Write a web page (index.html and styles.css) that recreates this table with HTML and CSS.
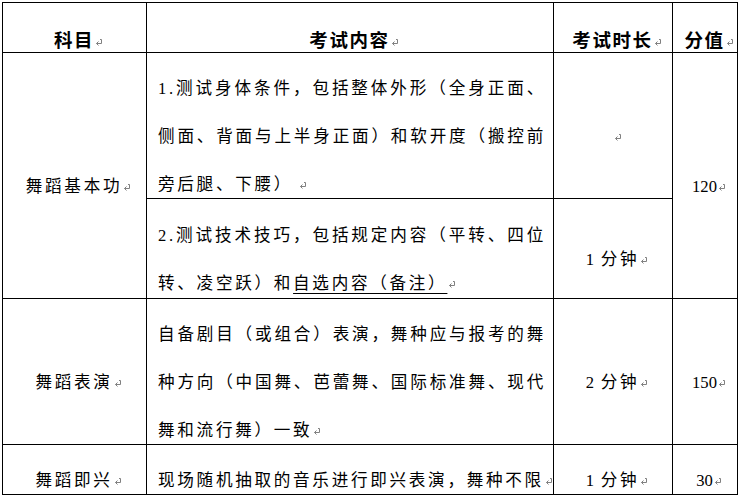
FILE: index.html
```html
<!DOCTYPE html>
<html lang="zh-CN">
<head>
<meta charset="utf-8">
<title>考试内容</title>
<link rel="stylesheet" href="styles.css">
</head>
<body>
<table class="exam">
  <colgroup>
    <col class="c1"><col class="c2"><col class="c3"><col class="c4">
  </colgroup>
  <tr class="h50">
    <th class="mid"><span class="ln">科目<svg class="pm" viewBox="0 0 8 8"><path d="M5 1.5H6.5V5.5H1.5M3.5 3.5L1.5 5.5L3.5 7.5"/></svg></span></th>
    <th class="mid"><span class="ln">考试内容<svg class="pm" viewBox="0 0 8 8"><path d="M5 1.5H6.5V5.5H1.5M3.5 3.5L1.5 5.5L3.5 7.5"/></svg></span></th>
    <th class="mid"><span class="ln">考试时长<svg class="pm" viewBox="0 0 8 8"><path d="M5 1.5H6.5V5.5H1.5M3.5 3.5L1.5 5.5L3.5 7.5"/></svg></span></th>
    <th class="mid"><span class="ln">分值<svg class="pm" viewBox="0 0 8 8"><path d="M5 1.5H6.5V5.5H1.5M3.5 3.5L1.5 5.5L3.5 7.5"/></svg></span></th>
  </tr>
  <tr class="h146">
    <td class="mid" rowspan="2"><span class="ln">舞蹈基本功<svg class="pm" viewBox="0 0 8 8"><path d="M5 1.5H6.5V5.5H1.5M3.5 3.5L1.5 5.5L3.5 7.5"/></svg></span></td>
    <td class="txt">
      <span class="ln jl">1.测试身体条件，包括整体外形（全身正面、</span>
      <span class="ln jl">侧面、背面与上半身正面）和软开度（搬控前</span>
      <span class="ln">旁后腿、下腰）<svg class="pm gap" viewBox="0 0 8 8"><path d="M5 1.5H6.5V5.5H1.5M3.5 3.5L1.5 5.5L3.5 7.5"/></svg></span>
    </td>
    <td class="mid"><span class="ln"><svg class="pm" viewBox="0 0 8 8"><path d="M5 1.5H6.5V5.5H1.5M3.5 3.5L1.5 5.5L3.5 7.5"/></svg></span></td>
    <td class="mid" rowspan="2"><span class="ln"><span class="num">120</span><svg class="pm" viewBox="0 0 8 8"><path d="M5 1.5H6.5V5.5H1.5M3.5 3.5L1.5 5.5L3.5 7.5"/></svg></span></td>
  </tr>
  <tr class="h100">
    <td class="txt">
      <span class="ln jl">2.测试技术技巧，包括规定内容（平转、四位</span>
      <span class="ln">转、凌空跃）和<span class="ul">自选内容（备注）</span><svg class="pm" viewBox="0 0 8 8"><path d="M5 1.5H6.5V5.5H1.5M3.5 3.5L1.5 5.5L3.5 7.5"/></svg></span>
    </td>
    <td class="mid"><span class="ln"><span class="num">1</span> 分钟<svg class="pm" viewBox="0 0 8 8"><path d="M5 1.5H6.5V5.5H1.5M3.5 3.5L1.5 5.5L3.5 7.5"/></svg></span></td>
  </tr>
  <tr class="h146">
    <td class="mid"><span class="ln">舞蹈表演<svg class="pm" viewBox="0 0 8 8"><path d="M5 1.5H6.5V5.5H1.5M3.5 3.5L1.5 5.5L3.5 7.5"/></svg></span></td>
    <td class="txt">
      <span class="ln jl">自备剧目（或组合）表演，舞种应与报考的舞</span>
      <span class="ln jl">种方向（中国舞、芭蕾舞、国际标准舞、现代</span>
      <span class="ln">舞和流行舞）一致<svg class="pm" viewBox="0 0 8 8"><path d="M5 1.5H6.5V5.5H1.5M3.5 3.5L1.5 5.5L3.5 7.5"/></svg></span>
    </td>
    <td class="mid"><span class="ln"><span class="num">2</span> 分钟<svg class="pm" viewBox="0 0 8 8"><path d="M5 1.5H6.5V5.5H1.5M3.5 3.5L1.5 5.5L3.5 7.5"/></svg></span></td>
    <td class="mid"><span class="ln"><span class="num">150</span><svg class="pm" viewBox="0 0 8 8"><path d="M5 1.5H6.5V5.5H1.5M3.5 3.5L1.5 5.5L3.5 7.5"/></svg></span></td>
  </tr>
  <tr class="h50">
    <td class="mid"><span class="ln">舞蹈即兴<svg class="pm" viewBox="0 0 8 8"><path d="M5 1.5H6.5V5.5H1.5M3.5 3.5L1.5 5.5L3.5 7.5"/></svg></span></td>
    <td class="txt"><span class="ln">现场随机抽取的音乐进行即兴表演，舞种不限<svg class="pm" viewBox="0 0 8 8"><path d="M5 1.5H6.5V5.5H1.5M3.5 3.5L1.5 5.5L3.5 7.5"/></svg></span></td>
    <td class="mid"><span class="ln"><span class="num">1</span> 分钟<svg class="pm" viewBox="0 0 8 8"><path d="M5 1.5H6.5V5.5H1.5M3.5 3.5L1.5 5.5L3.5 7.5"/></svg></span></td>
    <td class="mid"><span class="ln"><span class="num">30</span><svg class="pm" viewBox="0 0 8 8"><path d="M5 1.5H6.5V5.5H1.5M3.5 3.5L1.5 5.5L3.5 7.5"/></svg></span></td>
  </tr>
</table>
</body>
</html>
```
FILE: styles.css
```css
html, body {
  margin: 0;
  padding: 0;
  background: #ffffff;
}

body {
  padding: 2px 0 0 2px;
  font-family: "Liberation Serif", "Noto Sans CJK SC", serif;
  font-size: 16.6px;
  color: #000000;
}

.exam {
  border-collapse: collapse;
  table-layout: fixed;
  width: 735px;
}

.c1 { width: 144px; }
.c2 { width: 407px; }
.c3 { width: 119px; }
.c4 { width: 65px; }

.exam th,
.exam td {
  border: 1px solid #000000;
  padding: 0;
  vertical-align: middle;
}

.h50 { height: 50px; }
.h100 { height: 100px; }
.h146 { height: 146px; }

.mid {
  text-align: center;
  padding-left: 8px !important;
}

.txt {
  text-align: left;
  padding-left: 11px !important;
  padding-right: 7px !important;
}

.ln {
  display: block;
  padding-top: 22px;
  line-height: 26px;
  letter-spacing: 2.7px;
  white-space: nowrap;
}

.num {
  letter-spacing: 0;
}

.exam th {
  font-family: "Noto Sans CJK SC", sans-serif;
  font-weight: 700;
  font-size: 18.5px;
}

.exam th .ln {
  letter-spacing: 1.6px;
}

.jl {
  text-align: justify;
  text-align-last: justify;
}

.ul {
  text-decoration: underline;
  text-decoration-thickness: 1px;
  text-underline-offset: 4px;
}

.pm {
  width: 8px;
  height: 8px;
  vertical-align: 1px;
  margin-left: 1px;
  fill: none;
  stroke: #808080;
  stroke-width: 1;
}

.pm.gap {
  margin-left: 6px;
}
```
